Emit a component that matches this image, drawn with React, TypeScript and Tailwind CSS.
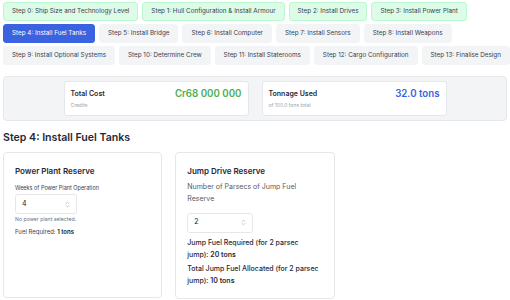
import { ChevronsUpDown } from "lucide-react";

type Step = { label: string; state: "done" | "active" | "todo" };

const rows: Step[][] = [
  [
    { label: "Step 0: Ship Size and Technology Level", state: "done" },
    { label: "Step 1: Hull Configuration & Install Armour", state: "done" },
    { label: "Step 2: Install Drives", state: "done" },
    { label: "Step 3: Install Power Plant", state: "done" },
  ],
  [
    { label: "Step 4: Install Fuel Tanks", state: "active" },
    { label: "Step 5: Install Bridge", state: "todo" },
    { label: "Step 6: Install Computer", state: "todo" },
    { label: "Step 7: Install Sensors", state: "todo" },
    { label: "Step 8: Install Weapons", state: "todo" },
  ],
  [
    { label: "Step 9: Install Optional Systems", state: "todo" },
    { label: "Step 10: Determine Crew", state: "todo" },
    { label: "Step 11: Install Staterooms", state: "todo" },
    { label: "Step 12: Cargo Configuration", state: "todo" },
    { label: "Step 13: Finalise Design", state: "todo" },
  ],
];

const stepClass = {
  done: "bg-[#dcfce7] border-[#bbf7d0] text-[#374151]",
  active: "bg-[#3b63e0] border-[#3b63e0] text-white",
  todo: "bg-[#f3f4f6] border-[#f3f4f6] text-[#374151]",
};

const NumberBox = ({ value, wide }: { value: string; wide?: boolean }) => (
  <div
    className={`flex items-center justify-between h-[20px] border border-[#e5e7eb] rounded-[3px] bg-white pl-[6px] pr-[5px] text-[7px] text-[#111827] ${
      wide ? "w-[66px]" : "w-[62px]"
    }`}
  >
    <span>{value}</span>
    <ChevronsUpDown className="w-[7px] h-[7px] text-[#9ca3af]" strokeWidth={2} />
  </div>
);

const SummaryCard = ({ title, sub, value, valueClass }: { title: string; sub: string; value: string; valueClass: string }) => (
  <div className="w-[185px] h-[35px] bg-white border border-[#e5e7eb] rounded-[3px] px-[6px] pt-[7px] flex items-start justify-between">
    <div className="flex flex-col gap-[6px] pt-[1px]">
      <span className="text-[7px] font-semibold text-[#1f2937] leading-none">{title}</span>
      <span className="text-[5px] text-[#9ca3af] leading-none">{sub}</span>
    </div>
    <span className={`text-[9.7px] font-semibold leading-none ${valueClass}`}>{value}</span>
  </div>
);

const App = () => {
  return (
    <div
      className="w-[510px] h-[300px] overflow-hidden bg-white px-[3px] pt-[2px]"
      style={{ fontFamily: "Inter, 'Noto Sans', sans-serif" }}
    >
      {/* step nav */}
      <div className="flex flex-col gap-[3px]">
        {rows.map((row, i) => (
          <div key={i} className="flex gap-[4px]">
            {row.map((s) => (
              <button
                key={s.label}
                className={`h-[19px] px-[8px] border rounded-[3px] text-[6.3px] whitespace-nowrap leading-none ${stepClass[s.state]}`}
              >
                {s.label}
              </button>
            ))}
          </div>
        ))}
      </div>

      {/* summary */}
      <div className="mt-[11px] h-[45px] bg-[#f3f4f6] border border-[#e5e7eb] rounded-[4px] flex items-center justify-center gap-[13px]">
        <SummaryCard title="Total Cost" sub="Credits" value="Cr68 000 000" valueClass="text-[#4caf50]" />
        <SummaryCard title="Tonnage Used" sub="of 100.0 tons total" value="32.0 tons" valueClass="text-[#3b63e0]" />
      </div>

      <h2 className="mt-[12px] text-[10.6px] font-semibold text-[#1f2937] leading-none">
        Step 4: Install Fuel Tanks
      </h2>

      <div className="mt-[8px] grid grid-cols-3 gap-[13px]">
        <div className="h-[146px] border border-[#e5e7eb] rounded-[4px] bg-white px-[11px] pt-[14px]">
          <h3 className="text-[8px] font-semibold text-[#1f2937] leading-none">Power Plant Reserve</h3>
          <p className="mt-[11px] text-[5.5px] text-[#374151] leading-none">Weeks of Power Plant Operation</p>
          <div className="mt-[3px]">
            <NumberBox value="4" />
          </div>
          <p className="mt-[3px] text-[5.2px] text-[#6b7280] leading-none">No power plant selected.</p>
          <p className="mt-[7px] text-[6px] text-[#374151] leading-none">
            Fuel Required: <span className="font-semibold text-[#111827]">1 tons</span>
          </p>
        </div>

        <div className="h-[147px] border border-[#e5e7eb] rounded-[4px] bg-white px-[11px] pt-[14px]">
          <h3 className="text-[8px] font-semibold text-[#1f2937] leading-none">Jump Drive Reserve</h3>
          <p className="mt-[6px] text-[7px] text-[#555b63] leading-[12px] whitespace-nowrap">
            Number of Parsecs of Jump Fuel
            <br />
            Reserve
          </p>
          <div className="mt-[8px]">
            <NumberBox value="2" wide />
          </div>
          <p className="mt-[4px] text-[7px] font-medium text-[#1f2937] leading-[12px] whitespace-nowrap">
            Jump Fuel Required (for 2 parsec
            <br />
            jump): <span className="font-semibold">20 tons</span>
          </p>
          <p className="mt-[2px] text-[7px] font-medium text-[#1f2937] leading-[12px] whitespace-nowrap">
            Total Jump Fuel Allocated (for 2 parsec
            <br />
            jump): <span className="font-semibold">10 tons</span>
          </p>
        </div>
      </div>
    </div>
  );
};

export default App;
